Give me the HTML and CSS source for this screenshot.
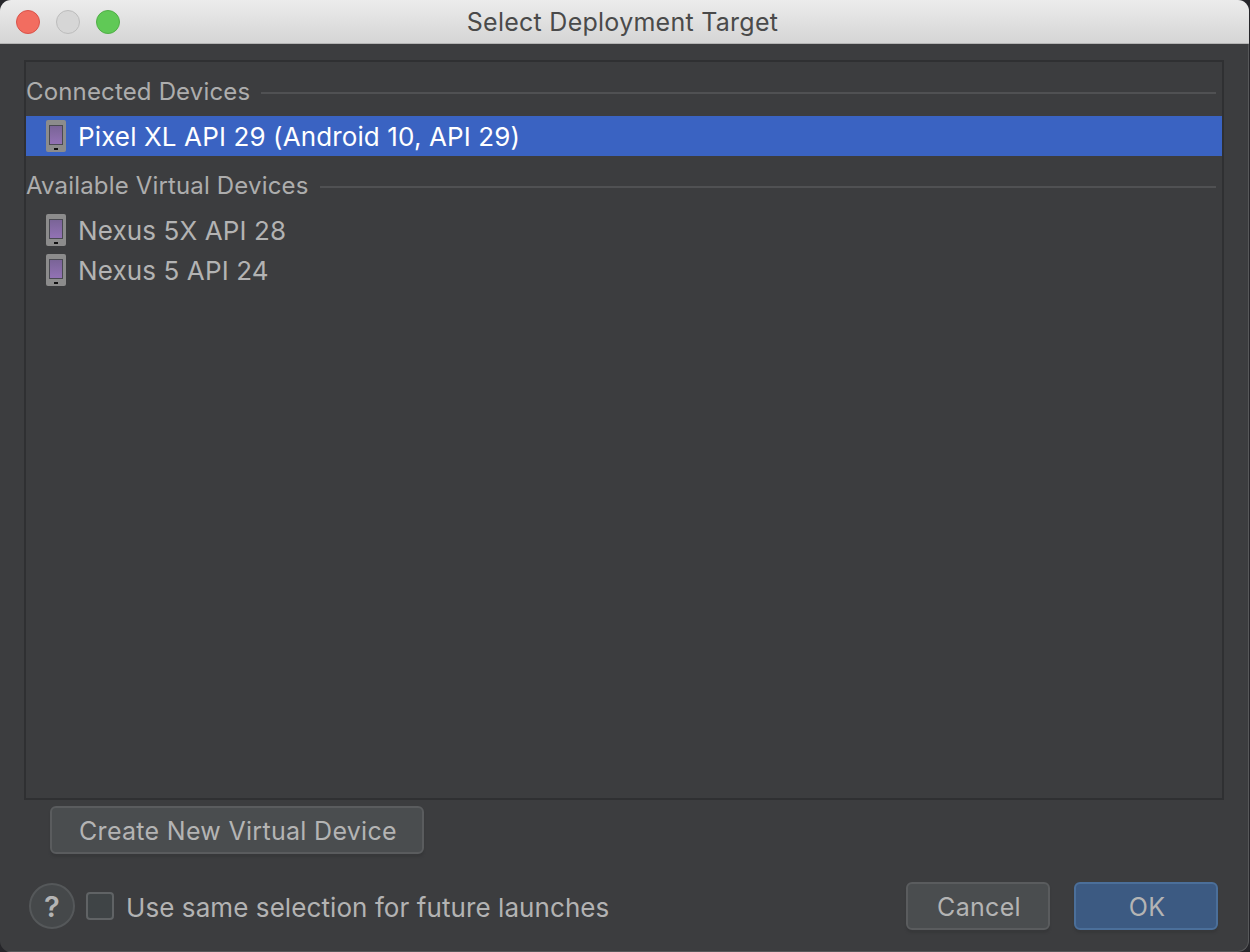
FILE: index.html
```html
<!DOCTYPE html>
<html lang="en">
<head>
<meta charset="utf-8">
<title>Select Deployment Target</title>
<link rel="stylesheet" href="styles.css">
</head>
<body>
<svg class="defs" width="0" height="0" aria-hidden="true">
  <defs>
    <linearGradient id="scr" x1="0" y1="0" x2="0" y2="1">
      <stop offset="0" stop-color="#7a6497"/>
      <stop offset="1" stop-color="#9272b4"/>
    </linearGradient>
    <symbol id="phone" viewBox="0 0 20 32">
      <rect width="20" height="32" rx="2" fill="#8c8c8c"/>
      <rect x="3" y="5" width="14" height="20" fill="#4a4a52"/>
      <rect x="4" y="6" width="12" height="18" fill="url(#scr)"/>
      <rect x="8" y="28" width="4" height="2" fill="#111"/>
    </symbol>
  </defs>
</svg>
<div class="window">
  <header class="titlebar">
    <div class="lights">
      <span class="light red"></span>
      <span class="light gray"></span>
      <span class="light green"></span>
    </div>
    <div class="title">Select Deployment Target</div>
  </header>
  <main class="body">
    <section class="panel">
      <div class="group first"><span>Connected Devices</span><i></i></div>
      <div class="row selected"><svg class="phone"><use href="#phone"/></svg><span>Pixel XL API 29 (Android 10, API 29)</span></div>
      <div class="group"><span>Available Virtual Devices</span><i></i></div>
      <div class="row"><svg class="phone"><use href="#phone"/></svg><span>Nexus 5X API 28</span></div>
      <div class="row"><svg class="phone"><use href="#phone"/></svg><span>Nexus 5 API 24</span></div>
    </section>
    <div class="create-row"><button class="btn create">Create New Virtual Device</button></div>
    <footer class="footer">
      <button class="help">?</button>
      <span class="check"></span>
      <span class="check-label">Use same selection for future launches</span>
      <div class="actions">
        <button class="btn action">Cancel</button>
        <button class="btn action primary">OK</button>
      </div>
    </footer>
  </main>
</div>
</body>
</html>
```
FILE: styles.css
```css
* { box-sizing: border-box; }
html, body { margin: 0; padding: 0; height: 100%; background: #26262a; overflow: hidden; }
body { font-family: Inter, "Liberation Sans", sans-serif; }
.defs { position: absolute; }
.window {
  width: 1249px;
  height: 952px;
  display: flex;
  flex-direction: column;
  background: #3c3d3f;
  border-radius: 11px;
  overflow: hidden;
}
.titlebar {
  height: 44px;
  flex: none;
  display: flex;
  align-items: center;
  justify-content: center;
  position: relative;
  background: linear-gradient(#ececec, #d5d5d5);
  border-bottom: 1px solid #b4b4b4;
}
.lights { position: absolute; left: 16px; top: 10px; display: flex; gap: 16px; }
.light { width: 24px; height: 24px; border-radius: 50%; border: 1px solid; }
.red { background: #f26d60; border-color: #d9534a; }
.gray { background: #d6d6d6; border-color: #bcbcbc; }
.green { background: #60c956; border-color: #50ae47; }
.title { font-size: 25px; color: #4a4a4a; letter-spacing: 0.26px; padding-right: 4px; }
.body {
  flex: 1;
  display: flex;
  flex-direction: column;
  padding: 16px 24px 0 24px;
  border-right: 1px solid #57585a;
  border-bottom: 1px solid #57585a;
  border-bottom-right-radius: 11px;
}
.panel {
  height: 740px;
  flex: none;
  border: 2px solid #2f3032;
  color: #b3b3b3;
}
.group {
  height: 54px;
  padding: 5px 6px 0 0;
  display: flex;
  align-items: center;
  gap: 11px;
  color: #adadad;
  font-size: 24px;
  letter-spacing: 0.16px;
}
.group.first { padding-top: 4px; }
.group i { flex: 1; height: 2px; background: #505153; margin-top: 3px; }
.row {
  height: 40px;
  display: flex;
  align-items: center;
  padding-left: 20px;
  gap: 12px;
  font-size: 26px;
  letter-spacing: 0.12px;
}
.row.selected { background: #3a63c2; color: #fff; }
.phone { width: 20px; height: 32px; flex: none; }
.create-row { padding: 6px 0 0 26px; }
.btn {
  font: inherit;
  font-size: 25px;
  letter-spacing: 0.3px;
  color: #b4b4b4;
  background: #4a4d4f;
  border: 2px solid #5a5c5e;
  border-radius: 6px;
  box-shadow: 0 3px 2px #37383a;
  padding: 2px 0 0 2px;
}
.create { width: 374px; height: 48px; display: block; }
.footer { display: flex; align-items: center; height: 48px; margin-top: 28px; padding-left: 5px; }
.help {
  width: 46px; height: 46px; padding: 0; flex: none;
  border-radius: 50%;
  border: 2px solid #55585a;
  background: #45484a;
  color: #b4b4b4;
  font: 600 29px Inter, sans-serif;
}
.check { width: 28px; height: 28px; margin-left: 11px; flex: none; background: #3f4446; border: 2px solid #606365; border-radius: 4px; }
.check-label { margin-left: 12px; padding-top: 2px; font-size: 26px; letter-spacing: 0.08px; color: #b3b3b3; }
.actions { margin-left: auto; display: flex; gap: 24px; padding-right: 6px; }
.action { width: 144px; height: 48px; }
.primary { background: #3c5a82; border-color: #4b6f9a; }
```
